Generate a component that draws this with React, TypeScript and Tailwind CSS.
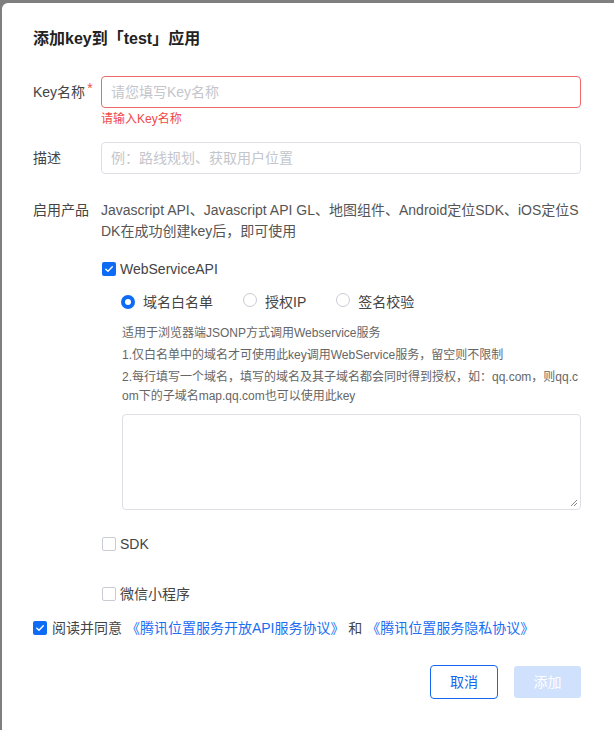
import React from "react";

const Check = ({ checked }: { checked: boolean }) =>
  checked ? (
    <span className="inline-flex h-[14px] w-[14px] shrink-0 items-center justify-center rounded-[2px] bg-[#0d6bf5]">
      <svg width="10" height="10" viewBox="0 0 10 10" fill="none">
        <path d="M1.8 5.2 L4 7.3 L8.3 2.8" stroke="white" strokeWidth="1.4" strokeLinecap="round" strokeLinejoin="round" />
      </svg>
    </span>
  ) : (
    <span className="inline-block h-[14px] w-[14px] shrink-0 rounded-[2px] border border-[#c9ccd3] bg-white" />
  );

const Radio = ({ checked }: { checked: boolean }) =>
  checked ? (
    <span className="inline-flex h-[14px] w-[14px] shrink-0 items-center justify-center rounded-full bg-[#0d6bf5]">
      <span className="h-[6px] w-[6px] rounded-full bg-white" />
    </span>
  ) : (
    <span className="inline-block h-[14px] w-[14px] shrink-0 rounded-full border border-[#c9ccd3] bg-white" />
  );

export default function App() {
  const font = { fontFamily: '"Liberation Sans", "Noto Sans CJK SC", sans-serif' };
  return (
    <div className="h-[730px] w-[614px] overflow-hidden bg-[#7f7f7f]" style={font}>
      <div className="ml-[2px] mt-[3px] h-[760px] rounded-tl-[6px] bg-white pl-[31px] pr-[33px] pt-[24px] text-[14px] text-[#333]">
        <div className="text-[16px] font-bold leading-[24px] text-[#222]">添加key到「test」应用</div>

        {/* Key name */}
        <div className="mt-[25px] flex">
          <div className="w-[68px] shrink-0 pt-[6px] leading-[20px] text-[#444]">
            Key名称<span className="relative -top-[4px] ml-[2px] text-[#f0504b]">*</span>
          </div>
          <div className="flex-1">
            <div className="flex h-[32px] items-center rounded-[4px] border border-[#f06a6a] px-[9px] text-[#c4c6cc]">
              请您填写Key名称
            </div>
            <div className="mt-[3px] text-[12px] leading-[16px] text-[#f04848]">请输入Key名称</div>
          </div>
        </div>

        {/* Description */}
        <div className="mt-[15px] flex">
          <div className="w-[68px] shrink-0 pt-[6px] leading-[20px] text-[#444]">描述</div>
          <div className="flex h-[32px] flex-1 items-center rounded-[4px] border border-[#dcdfe6] px-[9px] text-[#c4c6cc]">
            例：路线规划、获取用户位置
          </div>
        </div>

        {/* Products */}
        <div className="mt-[26px] flex">
          <div className="w-[68px] shrink-0 leading-[21px] text-[#444]">启用产品</div>
          <div className="flex-1">
            <div className="break-all leading-[21px] text-[#555]">
              Javascript API、Javascript API GL、地图组件、Android定位SDK、iOS定位SDK在成功创建key后，即可使用
            </div>

            <div className="mt-[17px] flex items-center gap-[4px] pl-[1px] leading-[20px] text-[#444]">
              <Check checked />
              <span>WebServiceAPI</span>
            </div>

            <div className="ml-[20px] mt-[13px] flex items-center leading-[20px] text-[#444]">
              <Radio checked />
              <span className="ml-[8px]">域名白名单</span>
              <span className="ml-[30px]"><Radio checked={false} /></span>
              <span className="ml-[8px]">授权IP</span>
              <span className="ml-[30px]"><Radio checked={false} /></span>
              <span className="ml-[8px]">签名校验</span>
            </div>

            <div className="ml-[21px] mt-[12px] break-all text-[12px] leading-[19px] text-[#666]">
              <div>适用于浏览器端JSONP方式调用Webservice服务</div>
              <div className="mt-[3px]">1.仅白名单中的域名才可使用此key调用WebService服务，留空则不限制</div>
              <div className="mt-[3px]">2.每行填写一个域名，填写的域名及其子域名都会同时得到授权，如：qq.com，则qq.com下的子域名map.qq.com也可以使用此key</div>
              <div className="relative mt-[8px] h-[96px] rounded-[4px] border border-[#dcdfe6]">
                <svg className="absolute bottom-[2px] right-[2px]" width="8" height="8" viewBox="0 0 8 8">
                  <path d="M7 1 L1 7 M7 4 L4 7" stroke="#888" strokeWidth="1" />
                </svg>
              </div>
            </div>

            <div className="mt-[24px] flex items-center gap-[4px] pl-[1px] leading-[20px] text-[#444]">
              <Check checked={false} />
              <span>SDK</span>
            </div>
            <div className="mt-[30px] flex items-center gap-[4px] pl-[1px] leading-[20px] text-[#444]">
              <Check checked={false} />
              <span>微信小程序</span>
            </div>
          </div>
        </div>

        <div className="mt-[14px] flex items-center gap-[5px] leading-[20px] text-[#444]">
          <Check checked />
          <span>
            阅读并同意 <span className="text-[#1a6ef2]">《腾讯位置服务开放API服务协议》</span> 和 <span className="text-[#1a6ef2]">《腾讯位置服务隐私协议》</span>
          </span>
        </div>

        <div className="mt-[27px] flex justify-end gap-[16px]">
          <div className="flex h-[34px] w-[68px] items-center justify-center rounded-[4px] border border-[#1466f0] text-[#1466f0]">
            取消
          </div>
          <div className="mt-[1px] flex h-[32px] w-[67px] items-center justify-center rounded-[3px] bg-[#cfe1fd] text-white">
            添加
          </div>
        </div>
      </div>
    </div>
  );
}
